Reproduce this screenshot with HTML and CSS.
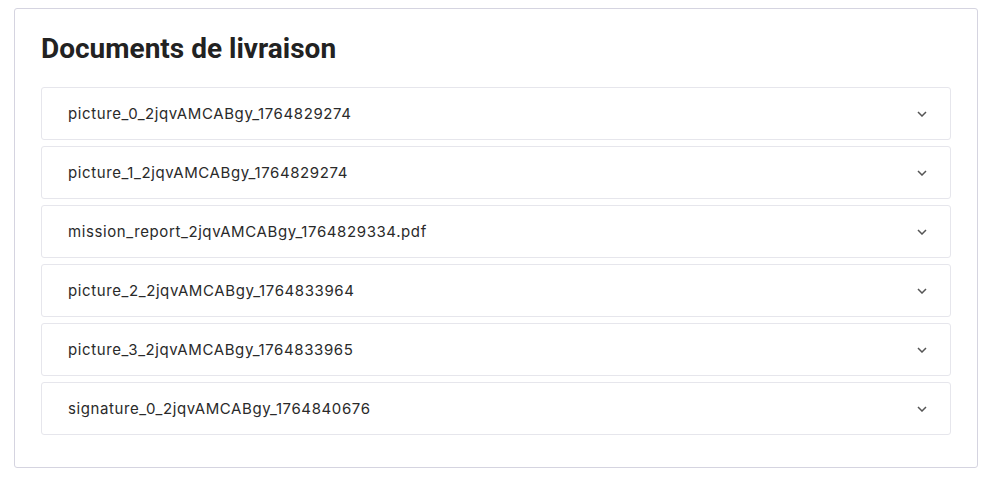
FILE: index.html
```html
<!DOCTYPE html>
<html lang="fr">
<head>
<meta charset="utf-8">
<title>Documents de livraison</title>
<link rel="stylesheet" href="styles.css">
</head>
<body>
<section class="card">
  <h2 class="title">Documents de livraison</h2>
  <div class="list">
    <div class="item"><span class="name">picture_0_2jqvAMCABgy_1764829274</span><svg class="chev" viewBox="0 0 10 6" width="10" height="6"><path d="M1 1l4 4 4-4" fill="none" stroke="#555" stroke-width="1.5"/></svg></div>
    <div class="item"><span class="name">picture_1_2jqvAMCABgy_1764829274</span><svg class="chev" viewBox="0 0 10 6" width="10" height="6"><path d="M1 1l4 4 4-4" fill="none" stroke="#555" stroke-width="1.5"/></svg></div>
    <div class="item"><span class="name">mission_report_2jqvAMCABgy_1764829334.pdf</span><svg class="chev" viewBox="0 0 10 6" width="10" height="6"><path d="M1 1l4 4 4-4" fill="none" stroke="#555" stroke-width="1.5"/></svg></div>
    <div class="item"><span class="name">picture_2_2jqvAMCABgy_1764833964</span><svg class="chev" viewBox="0 0 10 6" width="10" height="6"><path d="M1 1l4 4 4-4" fill="none" stroke="#555" stroke-width="1.5"/></svg></div>
    <div class="item"><span class="name">picture_3_2jqvAMCABgy_1764833965</span><svg class="chev" viewBox="0 0 10 6" width="10" height="6"><path d="M1 1l4 4 4-4" fill="none" stroke="#555" stroke-width="1.5"/></svg></div>
    <div class="item"><span class="name">signature_0_2jqvAMCABgy_1764840676</span><svg class="chev" viewBox="0 0 10 6" width="10" height="6"><path d="M1 1l4 4 4-4" fill="none" stroke="#555" stroke-width="1.5"/></svg></div>
  </div>
</section>
</body>
</html>
```
FILE: styles.css
```css
html, body {
  margin: 0;
  padding: 0;
  background: #ffffff;
}
body {
  padding: 8px 18px 0 14px;
}
.card {
  border: 1px solid #d5d4e0;
  border-radius: 3px;
  padding: 25px 26px 32px 26px;
  background: #fff;
}
.title {
  margin: 0 0 23px 0;
  font-family: Roboto, "Liberation Sans", sans-serif;
  font-weight: 700;
  font-size: 28px;
  line-height: 30px;
  color: #222222;
}
.list {
  display: flex;
  flex-direction: column;
  gap: 6px;
}
.item {
  display: flex;
  align-items: center;
  justify-content: space-between;
  height: 51px;
  padding: 0 23px 0 26px;
  border: 1px solid #e6e6ec;
  border-radius: 3px;
}
.name {
  font-family: Inter, "Open Sans", sans-serif;
  font-size: 15px;
  letter-spacing: 0.6px;
  color: #2a2a2a;
}
.chev {
  display: block;
}
```
